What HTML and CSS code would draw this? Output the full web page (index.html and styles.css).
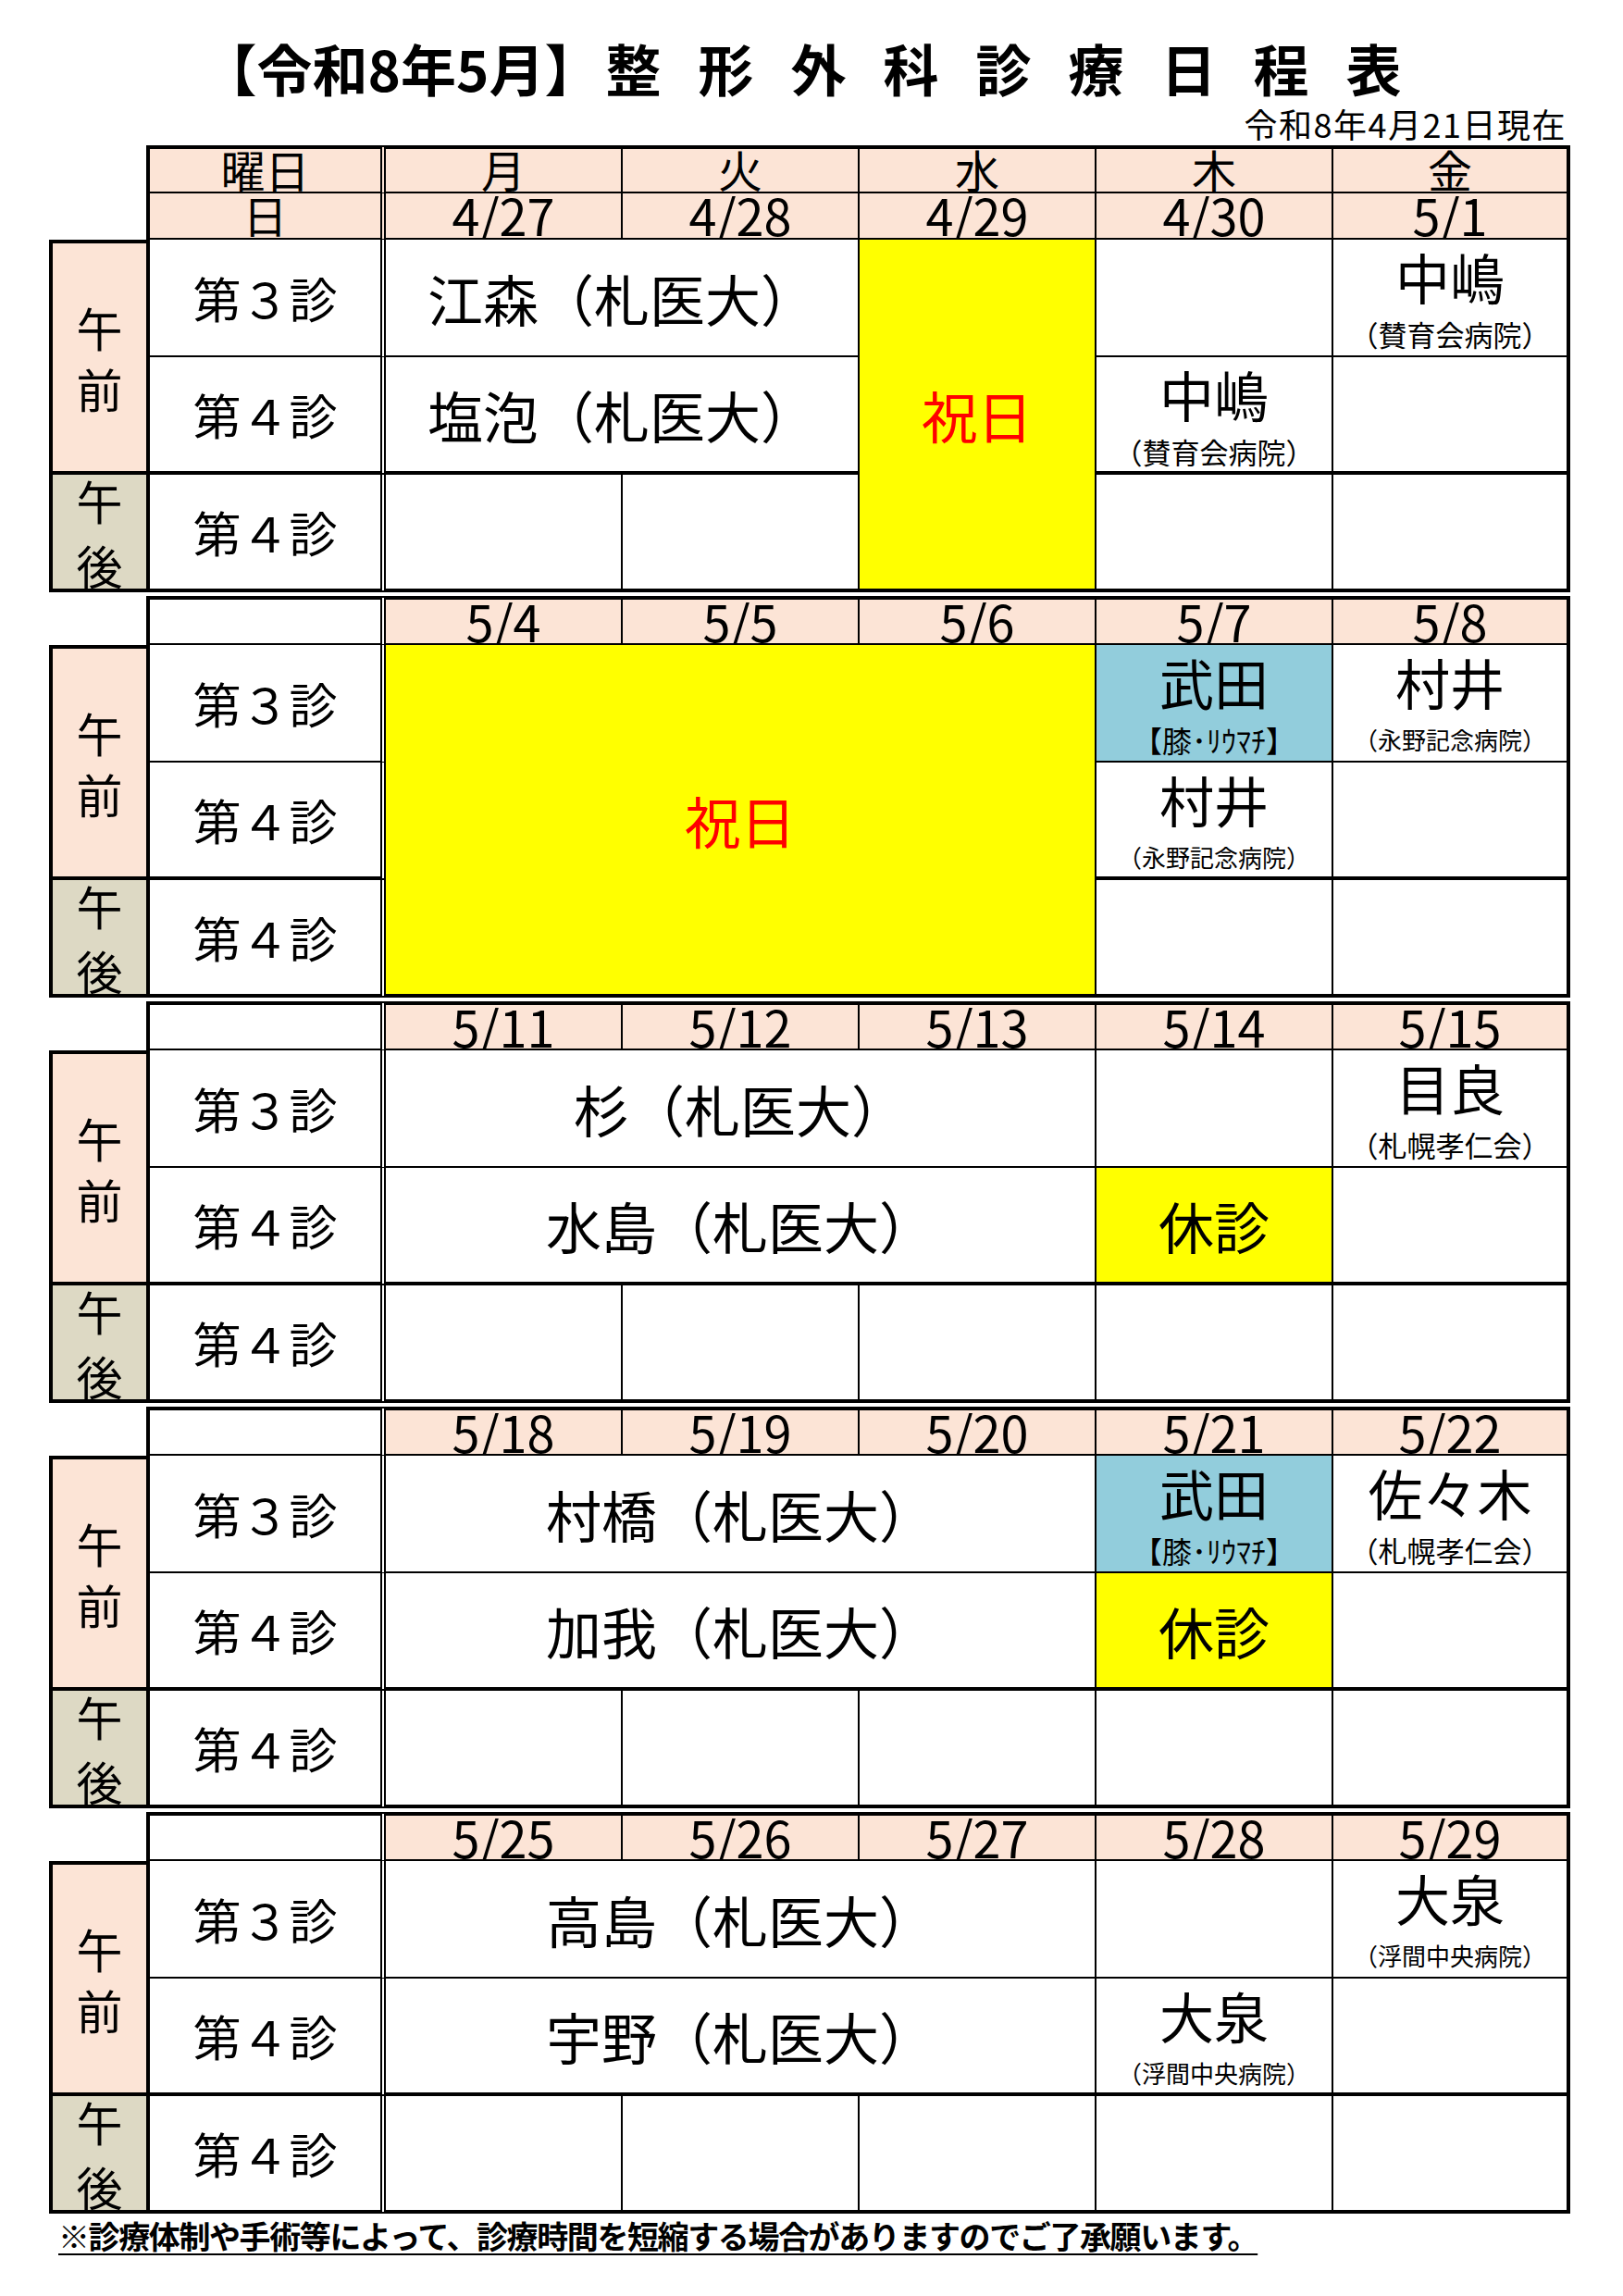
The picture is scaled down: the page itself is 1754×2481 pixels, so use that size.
FILE: index.html
```html
<!DOCTYPE html>
<html lang="ja">
<head>
<meta charset="utf-8">
<title>整形外科診療日程表</title>
<link rel="stylesheet" href="styles.css">
</head>
<body>
<main class="page">
  <h1 class="title"><span class="title-lead">【令和8年5月】</span><span class="title-main">整形外科診療日程表</span></h1>
  <p class="asof">令和8年4月21日現在</p>

  <section class="block block-first">
    <div class="blank"></div>
    <div class="cell hd c2 top">曜日</div>
    <div class="cell hd top">月</div>
    <div class="cell hd top">火</div>
    <div class="cell hd top">水</div>
    <div class="cell hd top">木</div>
    <div class="cell hd top last">金</div>
    <div class="blank"></div>
    <div class="cell hd c2">日</div>
    <div class="cell hd date">4/27</div>
    <div class="cell hd date">4/28</div>
    <div class="cell hd date">4/29</div>
    <div class="cell hd date">4/30</div>
    <div class="cell hd date last">5/1</div>

    <div class="period am"><span class="pl">午</span><span class="pl">前</span></div>
    <div class="cell c2 slot">第３診</div>
    <div class="cell span2 name">江森（札医大）</div>
    <div class="cell rows3 holiday thick">祝日</div>
    <div class="cell"></div>
    <div class="cell last doc"><span class="nm">中嶋</span><span class="sub">（賛育会病院）</span></div>

    <div class="cell c2 slot thick">第４診</div>
    <div class="cell span2 name thick">塩泡（札医大）</div>
    <div class="cell doc thick"><span class="nm">中嶋</span><span class="sub">（賛育会病院）</span></div>
    <div class="cell last thick"></div>

    <div class="period pm"><span class="pl">午</span><span class="pl">後</span></div>
    <div class="cell c2 slot thick">第４診</div>
    <div class="cell thick"></div>
    <div class="cell thick"></div>
    <div class="cell thick"></div>
    <div class="cell last thick"></div>
  </section>

  <section class="block">
    <div class="blank"></div>
    <div class="cell c2 top"></div>
    <div class="cell hd date top">5/4</div>
    <div class="cell hd date top">5/5</div>
    <div class="cell hd date top">5/6</div>
    <div class="cell hd date top">5/7</div>
    <div class="cell hd date top last">5/8</div>

    <div class="period am"><span class="pl">午</span><span class="pl">前</span></div>
    <div class="cell c2 slot">第３診</div>
    <div class="cell span3 rows3 holiday thick">祝日</div>
    <div class="cell doc knee"><span class="nm">武田</span><span class="sub sub-knee">【膝･ﾘｳﾏﾁ】</span></div>
    <div class="cell last doc"><span class="nm">村井</span><span class="sub sub-sm">（永野記念病院）</span></div>

    <div class="cell c2 slot thick">第４診</div>
    <div class="cell doc thick"><span class="nm">村井</span><span class="sub sub-sm">（永野記念病院）</span></div>
    <div class="cell last thick"></div>

    <div class="period pm"><span class="pl">午</span><span class="pl">後</span></div>
    <div class="cell c2 slot thick">第４診</div>
    <div class="cell thick"></div>
    <div class="cell last thick"></div>
  </section>

  <section class="block">
    <div class="blank"></div>
    <div class="cell c2 top"></div>
    <div class="cell hd date top">5/11</div>
    <div class="cell hd date top">5/12</div>
    <div class="cell hd date top">5/13</div>
    <div class="cell hd date top">5/14</div>
    <div class="cell hd date top last">5/15</div>

    <div class="period am"><span class="pl">午</span><span class="pl">前</span></div>
    <div class="cell c2 slot">第３診</div>
    <div class="cell span3 name">杉（札医大）</div>
    <div class="cell"></div>
    <div class="cell last doc"><span class="nm">目良</span><span class="sub">（札幌孝仁会）</span></div>

    <div class="cell c2 slot thick">第４診</div>
    <div class="cell span3 name thick">水島（札医大）</div>
    <div class="cell closed thick">休診</div>
    <div class="cell last thick"></div>

    <div class="period pm"><span class="pl">午</span><span class="pl">後</span></div>
    <div class="cell c2 slot thick">第４診</div>
    <div class="cell thick"></div>
    <div class="cell thick"></div>
    <div class="cell thick"></div>
    <div class="cell thick"></div>
    <div class="cell last thick"></div>
  </section>

  <section class="block">
    <div class="blank"></div>
    <div class="cell c2 top"></div>
    <div class="cell hd date top">5/18</div>
    <div class="cell hd date top">5/19</div>
    <div class="cell hd date top">5/20</div>
    <div class="cell hd date top">5/21</div>
    <div class="cell hd date top last">5/22</div>

    <div class="period am"><span class="pl">午</span><span class="pl">前</span></div>
    <div class="cell c2 slot">第３診</div>
    <div class="cell span3 name">村橋（札医大）</div>
    <div class="cell doc knee"><span class="nm">武田</span><span class="sub sub-knee">【膝･ﾘｳﾏﾁ】</span></div>
    <div class="cell last doc"><span class="nm">佐々木</span><span class="sub">（札幌孝仁会）</span></div>

    <div class="cell c2 slot thick">第４診</div>
    <div class="cell span3 name thick">加我（札医大）</div>
    <div class="cell closed thick">休診</div>
    <div class="cell last thick"></div>

    <div class="period pm"><span class="pl">午</span><span class="pl">後</span></div>
    <div class="cell c2 slot thick">第４診</div>
    <div class="cell thick"></div>
    <div class="cell thick"></div>
    <div class="cell thick"></div>
    <div class="cell thick"></div>
    <div class="cell last thick"></div>
  </section>

  <section class="block">
    <div class="blank"></div>
    <div class="cell c2 top"></div>
    <div class="cell hd date top">5/25</div>
    <div class="cell hd date top">5/26</div>
    <div class="cell hd date top">5/27</div>
    <div class="cell hd date top">5/28</div>
    <div class="cell hd date top last">5/29</div>

    <div class="period am"><span class="pl">午</span><span class="pl">前</span></div>
    <div class="cell c2 slot">第３診</div>
    <div class="cell span3 name">高島（札医大）</div>
    <div class="cell"></div>
    <div class="cell last doc"><span class="nm">大泉</span><span class="sub sub-sm">（浮間中央病院）</span></div>

    <div class="cell c2 slot thick">第４診</div>
    <div class="cell span3 name thick">宇野（札医大）</div>
    <div class="cell doc thick"><span class="nm">大泉</span><span class="sub sub-sm">（浮間中央病院）</span></div>
    <div class="cell last thick"></div>

    <div class="period pm"><span class="pl">午</span><span class="pl">後</span></div>
    <div class="cell c2 slot thick">第４診</div>
    <div class="cell thick"></div>
    <div class="cell thick"></div>
    <div class="cell thick"></div>
    <div class="cell thick"></div>
    <div class="cell last thick"></div>
  </section>

  <p class="note">※診療体制や手術等によって、診療時間を短縮する場合がありますのでご了承願います。</p>
</main>
</body>
</html>
```

FILE: styles.css
```css
*, *::before, *::after { box-sizing: border-box; }

html, body {
  margin: 0;
  padding: 0;
  background: #fff;
}

body {
  width: 1754px;
  min-height: 2481px;
  font-family: "Noto Sans CJK JP", "Noto Sans", sans-serif;
  color: #000;
}

.page {
  padding-top: 38px;
}

.title {
  display: flex;
  justify-content: center;
  margin: 0;
  height: 70px;
  line-height: 70px;
  font-size: 60px;
  font-weight: 700;
  white-space: nowrap;
  padding-right: 22px;
}

.title-lead {
  margin-right: 6px;
}

.title-main {
  letter-spacing: 40px;
  margin-right: -40px;
}

.asof {
  margin: 5px 0 0 53px;
  width: 1644px;
  padding-right: 4px;
  text-align: right;
  font-size: 36px;
  line-height: 41px;
  letter-spacing: 1.5px;
}

.block {
  display: grid;
  grid-template-columns: 105px 259px repeat(5, 256px);
  grid-template-rows: 53px repeat(3, 127px);
  width: 1644px;
  margin: 4px 0 0 53px;
}

.block-first {
  grid-template-rows: 52px 50px repeat(3, 127px);
  margin-top: 3px;
}

.cell {
  display: flex;
  flex-direction: column;
  align-items: center;
  justify-content: center;
  min-width: 0;
  border-right: 2px solid #000;
  border-bottom: 2px solid #000;
  background: #fff;
  white-space: nowrap;
}

.last { border-right-width: 4px; }
.top { border-top: 4px solid #000; }
.thick { border-bottom-width: 4px; }

.c2 {
  border-left: 4px solid #000;
  border-right: 6px double #000;
}

.span2 { grid-column: span 2; }
.span3 { grid-column: span 3; }
.rows3 { grid-row: span 3; }

.hd {
  background: #fce4d6;
  font-size: 48px;
  line-height: 1;
  padding-bottom: 4px;
}

.date {
  font-size: 54px;
  padding-bottom: 2px;
}

.period {
  display: flex;
  flex-direction: column;
  align-items: center;
  justify-content: center;
  font-size: 50px;
  border-left: 4px solid #000;
  border-bottom: 4px solid #000;
}

.pl {
  display: block;
  line-height: 1;
}

.am {
  grid-row: span 2;
  background: #fce4d6;
  border-top: 4px solid #000;
  gap: 16px;
}

.pm {
  background: #ddd9c4;
  gap: 20px;
  padding-top: 1px;
}

.slot {
  font-size: 52px;
  line-height: 1;
}

.name {
  font-size: 60px;
  line-height: 1;
}

.holiday {
  background: #ffff00;
  color: #ff0000;
  font-size: 60px;
  line-height: 1;
}

.closed {
  background: #ffff00;
  font-size: 60px;
  line-height: 1;
}

.knee {
  background: #92cddc;
}

.doc {
  justify-content: flex-start;
  padding-top: 9px;
}

.nm {
  font-size: 59px;
  line-height: 62px;
}

.sub {
  font-size: 31px;
  line-height: 30px;
  margin-top: 16px;
}

.sub-sm {
  font-size: 26px;
}

.sub-knee {
  font-size: 32px;
}

.note {
  margin: 4px 0 0 63px;
  font-size: 34px;
  line-height: 40px;
  font-weight: 700;
  letter-spacing: -1.4px;
  white-space: nowrap;
  text-decoration: underline;
  text-decoration-thickness: 2px;
  text-underline-offset: 5px;
}
```
